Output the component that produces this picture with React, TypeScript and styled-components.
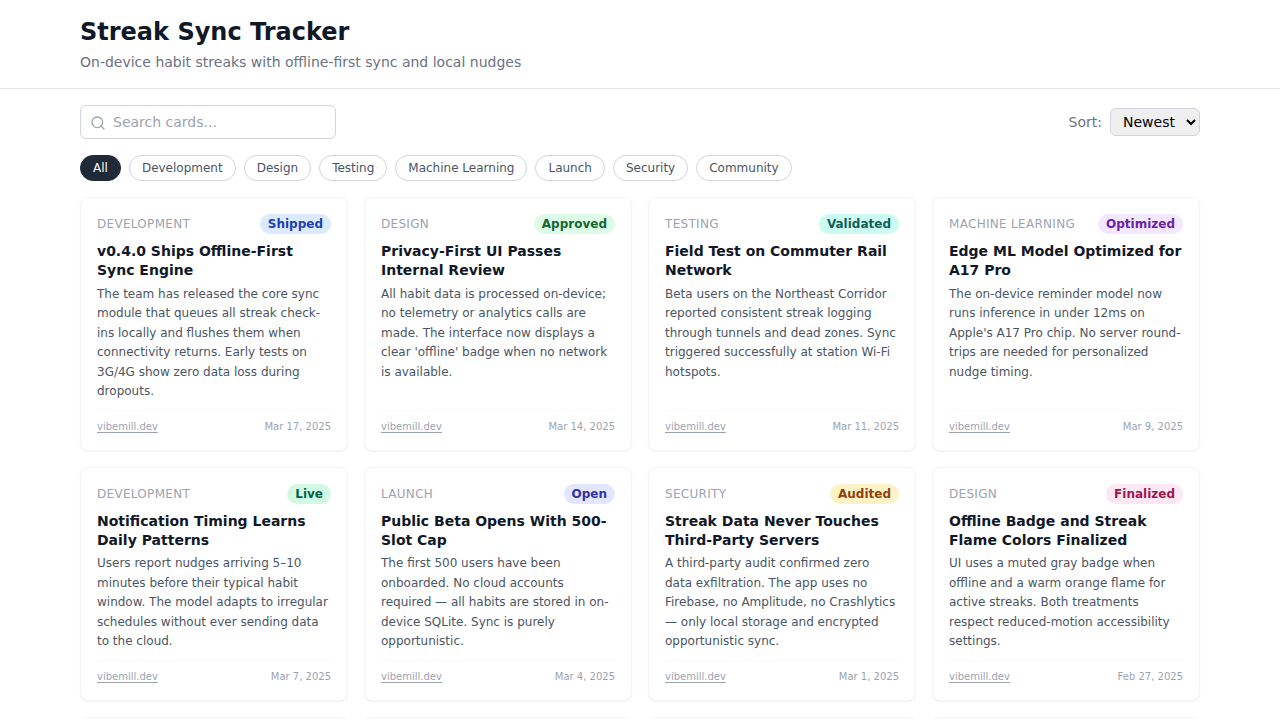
import React, { useState } from "react";
import styled, { createGlobalStyle } from "styled-components";

const GlobalStyle = createGlobalStyle`
  *, *::before, *::after { box-sizing: border-box; }
  body {
    margin: 0;
    background: #fff;
    color: #111827;
    font-family: "DejaVu Sans", sans-serif;
    line-height: 1.5;
  }
  h1, h2, p { margin: 0; }
  input, select, button { font-family: inherit; }
`;

const Page = styled.div`
  height: 100vh;
  overflow: hidden;
`;

const Header = styled.header`
  padding: 16px 80px;
  border-bottom: 1px solid #e5e7eb;
`;

const Title = styled.h1`
  font-size: 24px;
  line-height: 32px;
  font-weight: 700;
  color: #111827;
`;

const Subtitle = styled.p`
  margin-top: 4px;
  font-size: 14px;
  line-height: 20px;
  color: #6b7280;
`;

const Main = styled.main`
  display: flex;
  flex-direction: column;
  gap: 16px;
  padding: 16px 80px;
`;

const Toolbar = styled.div`
  display: flex;
  align-items: center;
  justify-content: space-between;
`;

const SearchBox = styled.label`
  display: flex;
  align-items: center;
  gap: 7px;
  width: 256px;
  height: 34px;
  padding: 0 9px;
  border: 1px solid #d1d5db;
  border-radius: 6px;
  color: #9ca3af;

  svg {
    flex: none;
    margin-top: 2px;
  }
`;

const SearchInput = styled.input`
  flex: 1;
  min-width: 0;
  padding: 0;
  border: 0;
  outline: 0;
  background: transparent;
  color: #111827;
  font-size: 14px;
  line-height: 20px;

  &::placeholder {
    color: #9ca3af;
    opacity: 1;
  }
`;

const SortLabel = styled.label`
  display: flex;
  align-items: center;
  gap: 8px;
  font-size: 14px;
  line-height: 20px;
  color: #6b7280;
`;

const SortSelect = styled.select`
  height: 28px;
  padding: 4px 8px;
  border: 1px solid #d1d5db;
  border-radius: 6px;
  background: #efefef;
  color: #000;
  font-size: 14px;
  line-height: 20px;
`;

const Filters = styled.div`
  display: flex;
  gap: 8px;
`;

const Pill = styled.button<{ $active: boolean }>`
  padding: 4px 12px;
  border: 1px solid ${(p) => (p.$active ? "#1f2937" : "#d1d5db")};
  border-radius: 999px;
  background: ${(p) => (p.$active ? "#1f2937" : "#fff")};
  color: ${(p) => (p.$active ? "#fff" : "#4b5563")};
  font-size: 12px;
  line-height: 16px;
`;

const Grid = styled.div`
  display: grid;
  grid-template-columns: repeat(4, 1fr);
  gap: 16px;
`;

const CardBox = styled.article`
  display: flex;
  flex-direction: column;
  min-height: 60px;
  padding: 16px;
  border: 1px solid #f3f4f6;
  border-radius: 8px;
  background: #fff;
  box-shadow: 0 1px 2px rgba(0, 0, 0, 0.05);
`;

const CardTop = styled.div`
  display: flex;
  align-items: center;
  justify-content: space-between;
  margin-bottom: 8px;
`;

const Category = styled.span`
  font-size: 12px;
  line-height: 16px;
  letter-spacing: 0.3px;
  text-transform: uppercase;
  color: #9ca3af;
`;

const Badge = styled.span<{ $bg: string; $fg: string }>`
  padding: 2px 8px;
  border-radius: 999px;
  background: ${(p) => p.$bg};
  color: ${(p) => p.$fg};
  font-size: 12px;
  line-height: 16px;
  font-weight: 600;
`;

const CardTitle = styled.h2`
  margin-bottom: 4px;
  font-size: 14px;
  line-height: 1.375;
  font-weight: 600;
  color: #111827;
`;

const CardText = styled.p`
  flex: 1;
  font-size: 12px;
  line-height: 1.625;
  color: #4b5563;
`;

const CardFooter = styled.footer`
  display: flex;
  align-items: center;
  justify-content: space-between;
  margin-top: 8px;
  padding-top: 8px;
  border-top: 1px solid #f9fafb;
  font-size: 10px;
  line-height: 15px;
  color: #9ca3af;
`;

const SourceLink = styled.a`
  color: inherit;
  text-decoration: underline;
  text-underline-offset: 2px;
`;

const tones = {
  blue: ["#dbeafe", "#1e40af"],
  green: ["#dcfce7", "#166534"],
  teal: ["#ccfbf1", "#115e59"],
  purple: ["#f3e8ff", "#6b21a8"],
  emerald: ["#d1fae5", "#065f46"],
  indigo: ["#e0e7ff", "#3730a3"],
  amber: ["#fef3c7", "#92400e"],
  pink: ["#fce7f3", "#9d174d"],
};

interface Update {
  category: string;
  status: string;
  tone: keyof typeof tones;
  title: string;
  text: string;
  date: string;
}

const categories = ["All", "Development", "Design", "Testing", "Machine Learning", "Launch", "Security", "Community"];

const updates: Update[] = [
  {
    category: "Development", status: "Shipped", tone: "blue", date: "Mar 17, 2025",
    title: "v0.4.0 Ships Offline-First Sync Engine",
    text: "The team has released the core sync module that queues all streak check-ins locally and flushes them when connectivity returns. Early tests on 3G/4G show zero data loss during dropouts.",
  },
  {
    category: "Design", status: "Approved", tone: "green", date: "Mar 14, 2025",
    title: "Privacy-First UI Passes Internal Review",
    text: "All habit data is processed on-device; no telemetry or analytics calls are made. The interface now displays a clear 'offline' badge when no network is available.",
  },
  {
    category: "Testing", status: "Validated", tone: "teal", date: "Mar 11, 2025",
    title: "Field Test on Commuter Rail Network",
    text: "Beta users on the Northeast Corridor reported consistent streak logging through tunnels and dead zones. Sync triggered successfully at station Wi-Fi hotspots.",
  },
  {
    category: "Machine Learning", status: "Optimized", tone: "purple", date: "Mar 9, 2025",
    title: "Edge ML Model Optimized for A17 Pro",
    text: "The on-device reminder model now runs inference in under 12ms on Apple's A17 Pro chip. No server round-trips are needed for personalized nudge timing.",
  },
  {
    category: "Development", status: "Live", tone: "emerald", date: "Mar 7, 2025",
    title: "Notification Timing Learns Daily Patterns",
    text: "Users report nudges arriving 5–10 minutes before their typical habit window. The model adapts to irregular schedules without ever sending data to the cloud.",
  },
  {
    category: "Launch", status: "Open", tone: "indigo", date: "Mar 4, 2025",
    title: "Public Beta Opens With 500-Slot Cap",
    text: "The first 500 users have been onboarded. No cloud accounts required — all habits are stored in on-device SQLite. Sync is purely opportunistic.",
  },
  {
    category: "Security", status: "Audited", tone: "amber", date: "Mar 1, 2025",
    title: "Streak Data Never Touches Third-Party Servers",
    text: "A third-party audit confirmed zero data exfiltration. The app uses no Firebase, no Amplitude, no Crashlytics — only local storage and encrypted opportunistic sync.",
  },
  {
    category: "Design", status: "Finalized", tone: "pink", date: "Feb 27, 2025",
    title: "Offline Badge and Streak Flame Colors Finalized",
    text: "UI uses a muted gray badge when offline and a warm orange flame for active streaks. Both treatments respect reduced-motion accessibility settings.",
  },
];

function SearchIcon() {
  return (
    <svg width="16" height="16" viewBox="0 0 24 24" fill="none" stroke="currentColor" strokeWidth="2" strokeLinecap="round" strokeLinejoin="round">
      <circle cx="11" cy="11" r="8" />
      <path d="m21 21-4.35-4.35" />
    </svg>
  );
}

function UpdateCard({ item }: { item: Update }) {
  const [bg, fg] = tones[item.tone];
  return (
    <CardBox>
      <CardTop>
        <Category>{item.category}</Category>
        <Badge $bg={bg} $fg={fg}>{item.status}</Badge>
      </CardTop>
      <CardTitle>{item.title}</CardTitle>
      <CardText>{item.text}</CardText>
      <CardFooter>
        <SourceLink>vibemill.dev</SourceLink>
        <span>{item.date}</span>
      </CardFooter>
    </CardBox>
  );
}

export default function App() {
  const [active, setActive] = useState("All");
  return (
    <Page>
      <GlobalStyle />
      <Header>
        <Title>Streak Sync Tracker</Title>
        <Subtitle>On-device habit streaks with offline-first sync and local nudges</Subtitle>
      </Header>
      <Main>
        <Toolbar>
          <SearchBox>
            <SearchIcon />
            <SearchInput placeholder="Search cards..." />
          </SearchBox>
          <SortLabel>
            Sort:
            <SortSelect>
              <option>Newest</option>
            </SortSelect>
          </SortLabel>
        </Toolbar>
        <Filters>
          {categories.map((c) => (
            <Pill key={c} $active={c === active} onClick={() => setActive(c)}>{c}</Pill>
          ))}
        </Filters>
        <Grid>
          {updates.map((u) => <UpdateCard key={u.title} item={u} />)}
          {[0, 1, 2, 3].map((i) => <CardBox key={i} />)}
        </Grid>
      </Main>
    </Page>
  );
}
